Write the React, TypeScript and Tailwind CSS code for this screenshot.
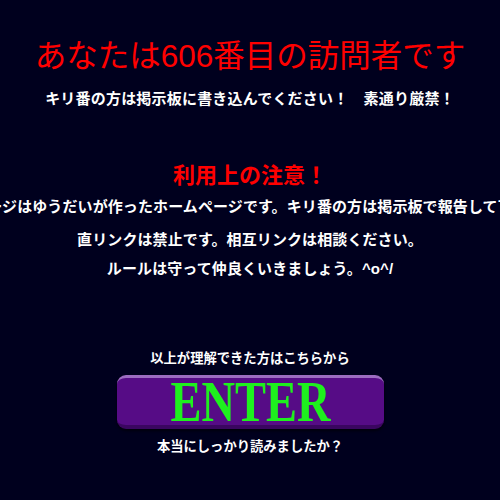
export default function App() {
  return (
    <div
      className="w-[500px] h-[500px] overflow-hidden bg-[#00001e] flex flex-col items-center text-white"
      style={{ fontFamily: '"Liberation Sans", "Noto Sans CJK JP", sans-serif' }}
    >
      <h1 className="mt-[38px] text-[31.5px] leading-[36px] text-[#ff0000] whitespace-nowrap">
        あなたは606番目の訪問者です
      </h1>
      <p className="mt-[15px] text-[15px] leading-[20px] font-bold tracking-[0.2px] whitespace-nowrap">
        キリ番の方は掲示板に書き込んでください！　素通り厳禁！
      </p>

      <h2 className="mt-[54px] text-[22px] leading-[26px] font-bold text-[#ff0000] whitespace-nowrap">
        利用上の注意！
      </h2>
      <div className="w-full flex flex-col items-center text-[15px] leading-[29px] font-bold tracking-[0.1px] mt-[3px]">
        <div className="w-full flex justify-center mb-[4px]">
          <span className="shrink-0 whitespace-nowrap">
            このページはゆうだいが作ったホームページです。キリ番の方は掲示板で報告して下さい。
          </span>
        </div>
        <span className="whitespace-nowrap">直リンクは禁止です。相互リンクは相談ください。</span>
        <span className="whitespace-nowrap">ルールは守って仲良くいきましょう。^o^/</span>
      </div>

      <p className="mt-[67px] text-[13.3px] leading-[18px] font-bold whitespace-nowrap">
        以上が理解できた方はこちらから
      </p>
      <button className="mt-[7px] w-[267px] h-[54px] rounded-[9px] bg-[#560c86] border-t-[3px] border-t-[#9c6cc0] border-b-[4px] border-b-[#3a0660] shadow-[0_2px_3px_rgba(0,0,0,0.6)] flex items-center justify-center">
        <span
          className="text-[56px] leading-none font-bold text-[#1ef01e] scale-x-[0.83] inline-block"
          style={{ fontFamily: '"Liberation Serif", serif' }}
        >
          ENTER
        </span>
      </button>
      <p className="mt-[9px] text-[13.3px] leading-[18px] font-bold whitespace-nowrap">
        本当にしっかり読みましたか？
      </p>
    </div>
  );
}
